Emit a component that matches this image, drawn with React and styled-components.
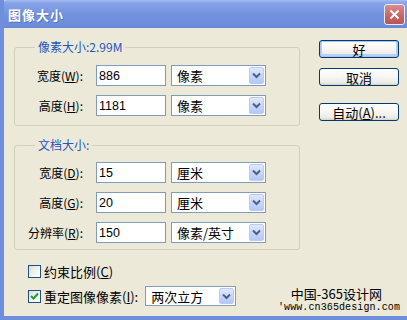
import React from 'react';
import styled, { createGlobalStyle } from 'styled-components';

const GlobalStyle = createGlobalStyle`
  html, body {
    margin: 0;
    padding: 0;
    background: #ece9d8;
  }
  body {
    font-family: "Noto Sans CJK SC", "Liberation Sans", sans-serif;
    font-size: 12px;
    color: #000;
  }
`;

// Window frame
const Window = styled.div`
  position: relative;
  width: 407px;
  height: 320px;
  box-sizing: border-box;
  display: flex;
  flex-direction: column;
  background: #ece9d8;
  border-left: 4px solid #6f8fdc;
  border-bottom: 4px solid #6f8fdc;
  overflow: hidden;
`;

const TitleBar = styled.div`
  height: 28px;
  margin-left: -4px;
  flex-shrink: 0;
  display: flex;
  align-items: center;
  justify-content: space-between;
  padding: 0 2px 0 8px;
  background: linear-gradient(180deg, #a4baf0 0%, #86a3e8 12%, #7393df 50%, #6d8edc 88%, #6487d8 100%);
  border-top-left-radius: 7px;
`;

const Title = styled.span`
  color: #fff;
  font-size: 13px;
  font-weight: bold;
  letter-spacing: 1px;
  text-shadow: 1px 1px 0 #5a73b8;
`;

const CloseButton = styled.div`
  width: 19px;
  height: 19px;
  border-radius: 3px;
  border: 1px solid #e7ecf8;
  background: linear-gradient(180deg, #d98d8d 0%, #c86464 60%, #b85555 100%);
  display: flex;
  align-items: center;
  justify-content: center;
`;

const Body = styled.div`
  flex: 1;
  display: flex;
  padding: 12px 8px 0 10px;
  gap: 19px;
`;

const LeftColumn = styled.div`
  width: 286px;
  display: flex;
  flex-direction: column;
`;

const RightColumn = styled.div`
  width: 80px;
  display: flex;
  flex-direction: column;
`;

// Group boxes
const Group = styled.fieldset`
  margin: 0 0 ${p => p.$gapBelow || 0}px 0;
  padding: ${p => p.$padTop}px 0 ${p => p.$padBottom}px 6px;
  border: 1px solid #d0d0bf;
  border-radius: 3px;
  display: flex;
  flex-direction: column;
  gap: 9px;
  min-width: 0;
`;

const Legend = styled.legend`
  margin-left: 14px;
  padding: 0 3px;
  color: #2456c0;
  font-size: 12px;
  line-height: 14px;
  height: 14px;
`;

const Row = styled.div`
  display: flex;
  align-items: center;
  height: 21px;
`;

const Label = styled.label`
  width: 62px;
  text-align: right;
  margin-right: 13px;
  white-space: nowrap;
  font-size: 12px;
`;

const Key = styled.span`
  text-decoration: underline;
`;

const TextInput = styled.div`
  width: 70px;
  height: 21px;
  box-sizing: border-box;
  border: 1px solid #7f9db9;
  background: #fff;
  display: flex;
  align-items: center;
  padding-left: 2px;
  font-family: "Liberation Sans", sans-serif;
  font-size: 12.5px;
  margin-right: 5px;
`;

const Select = styled.div`
  width: ${p => p.$width}px;
  height: ${p => p.$height || 21}px;
  box-sizing: border-box;
  border: 1px solid #7f9db9;
  background: #fff;
  display: flex;
  align-items: center;
  justify-content: space-between;
  padding: 1px 1px 1px 5px;
  font-size: 13px;
`;

const ArrowBox = styled.div`
  width: 15px;
  height: 100%;
  box-sizing: border-box;
  border: 1px solid #bccbf2;
  border-radius: 2px;
  background: linear-gradient(180deg, #dfe8fd 0%, #c3d3fb 60%, #b4c7f6 100%);
  display: flex;
  align-items: center;
  justify-content: center;
`;

// Checkboxes
const Options = styled.div`
  margin-top: 14px;
  padding-left: 14px;
  display: flex;
  flex-direction: column;
  gap: 8px;
`;

const OptionRow = styled.div`
  display: flex;
  align-items: center;
  height: ${p => p.$height || 14}px;
`;

const Check = styled.div`
  width: 13px;
  height: 13px;
  box-sizing: border-box;
  border: 1px solid #1c5180;
  background: linear-gradient(135deg, #dcdcd7 0%, #f5f5f2 60%, #fff 100%);
  margin-right: 3px;
  display: flex;
  align-items: center;
  justify-content: center;
`;

const OptionText = styled.span`
  font-size: 13px;
  margin-right: ${p => p.$gap || 0}px;
  white-space: nowrap;
`;

// Buttons
const Button = styled.div`
  width: 80px;
  height: 18px;
  box-sizing: border-box;
  border: 1px solid #003c74;
  border-radius: 3px;
  margin-bottom: ${p => p.$gapBelow || 0}px;
  background: linear-gradient(180deg, #ffffff 0%, #f7f6f2 50%, #ecebe6 85%, #d8d2c6 100%);
  box-shadow: ${p => (p.$default ? 'inset 0 0 0 1px #a9c3f5, inset 0 -1px 0 2px #bcd0f7' : 'none')};
  display: flex;
  align-items: center;
  justify-content: center;
  font-size: 13px;
`;

// Site watermark stamped over the bottom-right corner
const Watermark = styled.div`
  position: absolute;
  right: 7px;
  bottom: 3px;
  display: flex;
  flex-direction: column;
  align-items: flex-end;
  gap: 2px;
`;

const MarkTitle = styled.span`
  display: block;
  font-size: 13px;
  line-height: 13px;
  height: 13px;
  margin-right: 18px;
`;

const MarkUrl = styled.span`
  display: block;
  font-family: "Liberation Mono", monospace;
  font-size: 10px;
  line-height: 11px;
  height: 11px;
  letter-spacing: 0.1px;
`;

const Chevron = () => (
  <svg width="9" height="7" viewBox="0 0 9 7">
    <path d="M1 1.5 L4.5 5 L8 1.5" fill="none" stroke="#4d6185" strokeWidth="2" />
  </svg>
);

const Dropdown = ({ width, height, children }) => (
  <Select $width={width} $height={height}>
    <span>{children}</span>
    <ArrowBox>
      <Chevron />
    </ArrowBox>
  </Select>
);

const Field = ({ label, hotkey, value, unit }) => (
  <Row>
    <Label>
      {label}(<Key>{hotkey}</Key>):
    </Label>
    <TextInput>{value}</TextInput>
    <Dropdown width={95}>{unit}</Dropdown>
  </Row>
);

export default function App() {
  return (
    <>
      <GlobalStyle />
      <Window>
        <TitleBar>
          <Title>图像大小</Title>
          <CloseButton>
            <svg width="11" height="11" viewBox="0 0 11 11">
              <path d="M1.5 1.5 L9.5 9.5 M9.5 1.5 L1.5 9.5" stroke="#fff" strokeWidth="2" />
            </svg>
          </CloseButton>
        </TitleBar>
        <Body>
          <LeftColumn>
            <Group $padTop={11} $padBottom={9} $gapBelow={12}>
              <Legend>像素大小:2.99M</Legend>
              <Field label="宽度" hotkey="W" value="886" unit="像素" />
              <Field label="高度" hotkey="H" value="1181" unit="像素" />
            </Group>
            <Group $padTop={10} $padBottom={6}>
              <Legend>文档大小:</Legend>
              <Field label="宽度" hotkey="D" value="15" unit="厘米" />
              <Field label="高度" hotkey="G" value="20" unit="厘米" />
              <Field label="分辨率" hotkey="R" value="150" unit="像素/英寸" />
            </Group>
            <Options>
              <OptionRow>
                <Check />
                <OptionText>
                  约束比例(<Key>C</Key>)
                </OptionText>
              </OptionRow>
              <OptionRow $height={20}>
                <Check>
                  <svg width="9" height="8" viewBox="0 0 9 8">
                    <path d="M1 4 L3.5 6.5 L8 1.5" fill="none" stroke="#21a121" strokeWidth="2" />
                  </svg>
                </Check>
                <OptionText $gap={7}>
                  重定图像像素(<Key>I</Key>):
                </OptionText>
                <Dropdown width={91} height={20}>两次立方</Dropdown>
              </OptionRow>
            </Options>
          </LeftColumn>
          <RightColumn>
            <Button $default $gapBelow={10}>好</Button>
            <Button $gapBelow={17}>取消</Button>
            <Button>
              自动(<Key>A</Key>)...
            </Button>
          </RightColumn>
        </Body>
        <Watermark>
          <MarkTitle>中国-365设计网</MarkTitle>
          <MarkUrl>'www.cn365design.com</MarkUrl>
        </Watermark>
      </Window>
    </>
  );
}
